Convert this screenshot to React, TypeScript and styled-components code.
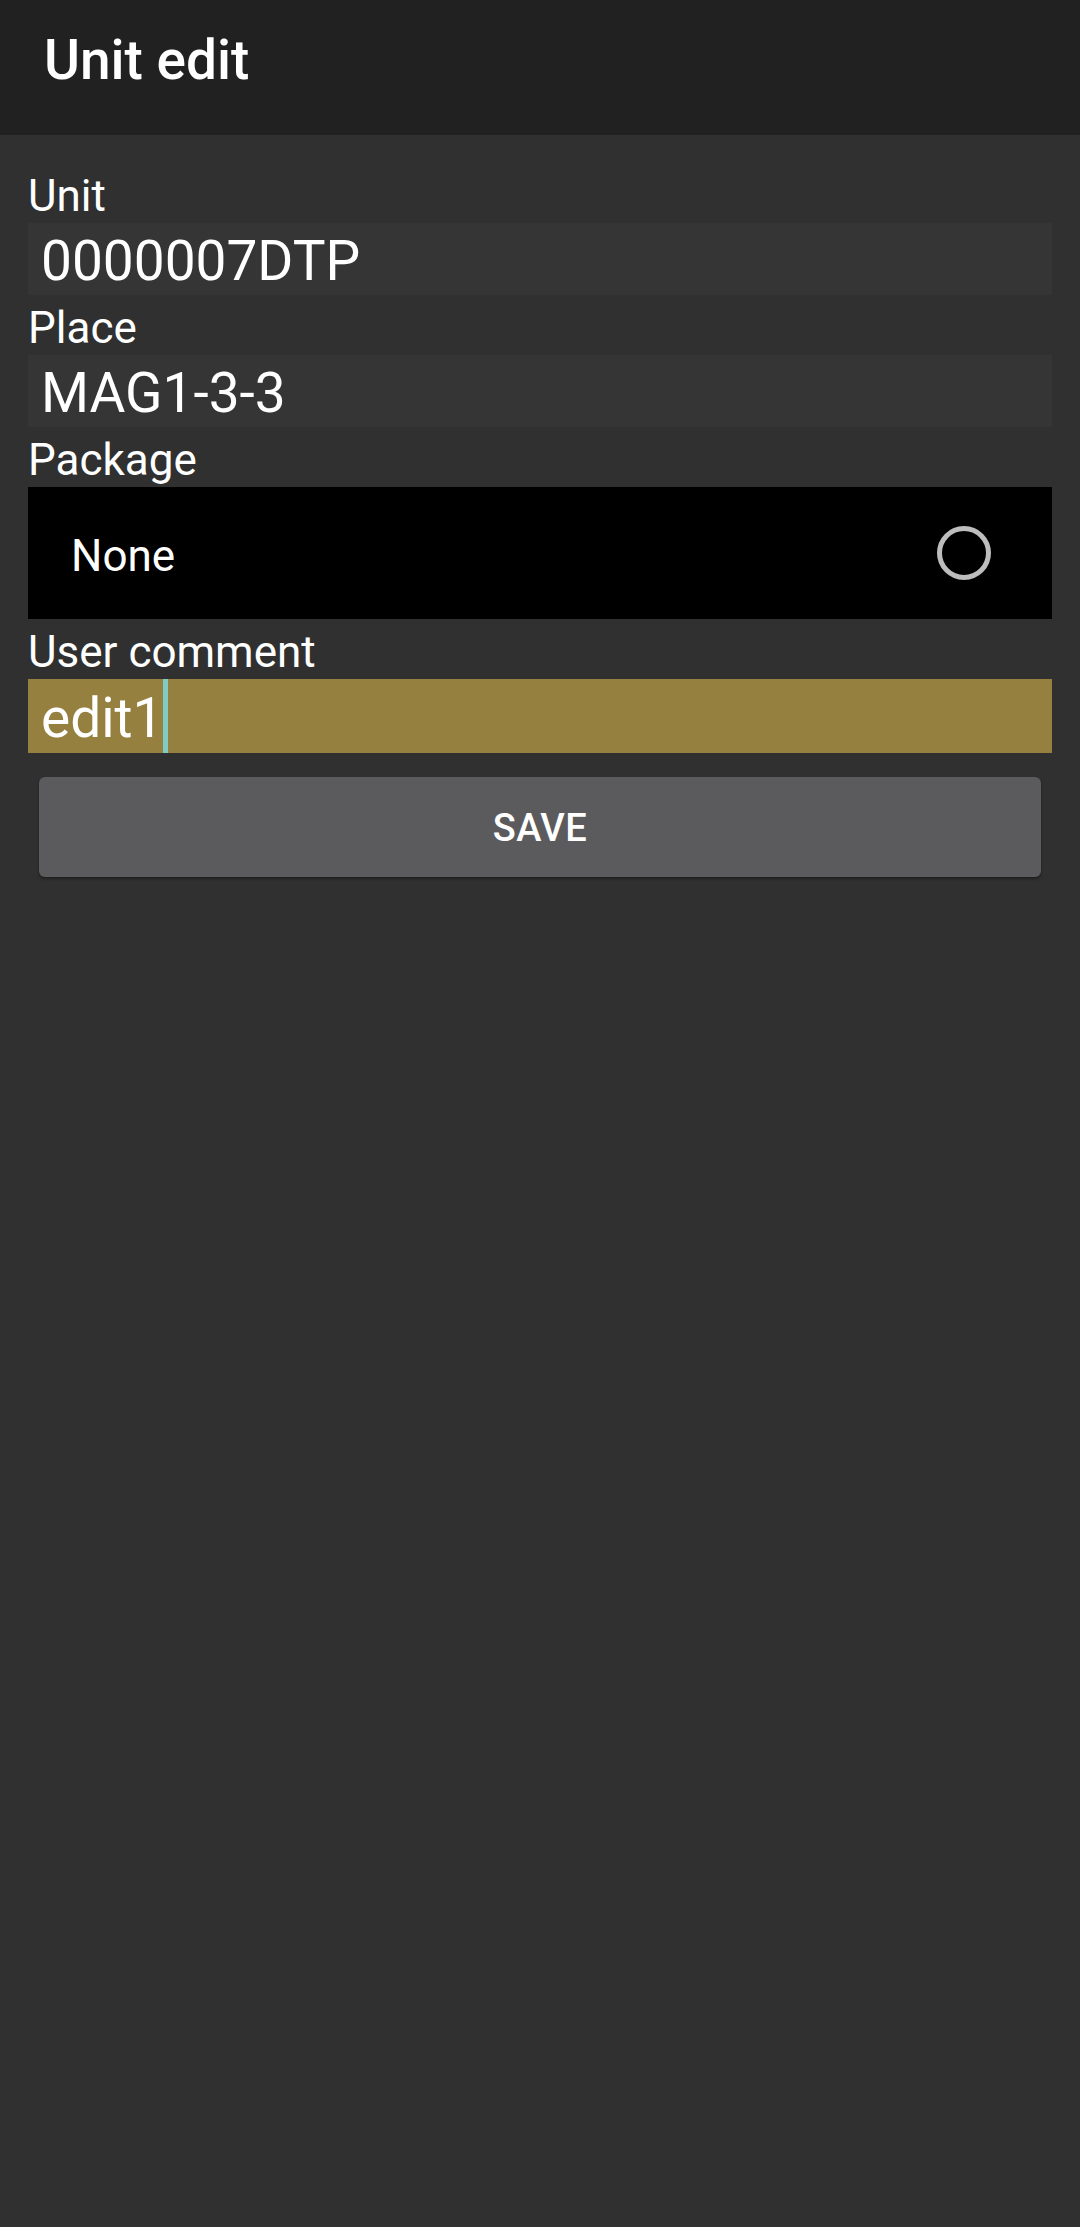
import styled, { createGlobalStyle } from "styled-components";

const GlobalStyle = createGlobalStyle`
  html, body {
    margin: 0;
    padding: 0;
    background: #303030;
  }
  body {
    font-family: Roboto, "Noto Sans", "Liberation Sans", sans-serif;
    color: #ffffff;
  }
`;

const Screen = styled.div`
  width: 1080px;
  min-height: 2227px;
  background: #303030;
  display: flex;
  flex-direction: column;
`;

const Toolbar = styled.header`
  height: 135px;
  background: #212121;
  display: flex;
  align-items: flex-start;
  padding-left: 44px;
  box-sizing: border-box;
`;

const Title = styled.h1`
  margin: 0;
  font-size: 55px;
  font-weight: 500;
  line-height: 64px;
  padding-top: 28px;
  color: #ffffff;
`;

const Form = styled.main`
  display: flex;
  flex-direction: column;
  padding: 34px 28px 0;
`;

const Label = styled.div`
  font-size: 44px;
  line-height: 54px;
  color: #ffffff;
  margin-top: 6px;

  &:first-child {
    margin-top: 0;
  }
`;

const Field = styled.div<{ $bg: string; $height: number }>`
  height: ${(p) => p.$height}px;
  box-sizing: border-box;
  background: ${(p) => p.$bg};
  display: flex;
  align-items: center;
  padding: 4px 0 0 13px;
  font-size: 55px;
  color: #ffffff;
  white-space: pre;
`;

const Cursor = styled.span`
  align-self: stretch;
  width: 5px;
  margin: -4px 0 0 0;
  background: #80cbc4;
`;

const Spinner = styled.div`
  height: 132px;
  background: #000000;
  display: flex;
  align-items: center;
  justify-content: space-between;
  padding: 0 61px 0 43px;
`;

const SpinnerText = styled.span`
  font-size: 44px;
  color: #ffffff;
  padding-top: 5px;
`;

const Radio = styled.span`
  width: 44px;
  height: 44px;
  border: 5px solid #bdbdbd;
  border-radius: 50%;
`;

const SaveButton = styled.button`
  margin: 24px 11px 0;
  height: 100px;
  border: none;
  border-radius: 6px;
  background: #5b5b5d;
  color: #ffffff;
  font-family: inherit;
  font-size: 38px;
  font-weight: 500;
  letter-spacing: 0.5px;
  padding-top: 2px;
  box-shadow: 0 2px 3px rgba(0, 0, 0, 0.35);
`;

export default function App() {
  return (
    <Screen>
      <GlobalStyle />
      <Toolbar>
        <Title>Unit edit</Title>
      </Toolbar>
      <Form>
        <Label>Unit</Label>
        <Field $bg="#353535" $height={72}>0000007DTP</Field>
        <Label>Place</Label>
        <Field $bg="#353535" $height={72}>MAG1-3-3</Field>
        <Label>Package</Label>
        <Spinner>
          <SpinnerText>None</SpinnerText>
          <Radio />
        </Spinner>
        <Label>User comment</Label>
        <Field $bg="#958040" $height={74}>
          edit1
          <Cursor />
        </Field>
        <SaveButton>SAVE</SaveButton>
      </Form>
    </Screen>
  );
}
